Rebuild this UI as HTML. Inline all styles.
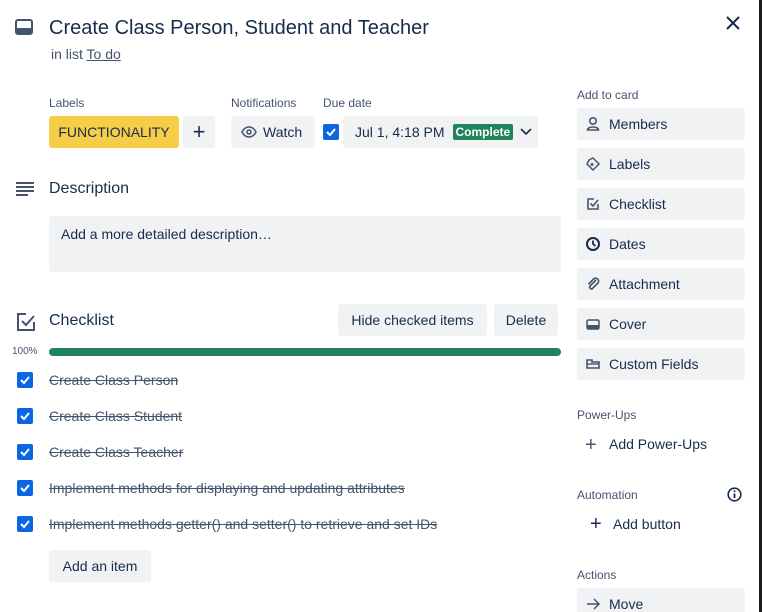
<!DOCTYPE html>
<html><head><style>
*{margin:0;padding:0;box-sizing:border-box}
html{width:762px;height:612px;overflow:hidden;background:#fff}
body{width:762px;height:612px;overflow:hidden;font-family:"Liberation Sans",sans-serif;color:#172b4d;position:relative}
.edge{position:absolute;left:759px;top:0;width:3px;height:612px;background:#1d1d1d}
.card{position:absolute;left:0;top:0;width:759px;height:612px;background:#fff;border-radius:0 10px 0 0;overflow:hidden}
.a{position:absolute;white-space:nowrap}
.btn{position:absolute;background:#f1f2f4;border-radius:3px;font-size:14px;color:#172b4d;display:flex;align-items:center}
.lbl{font-size:12px;color:#44546f}
.cb{position:absolute;left:17px;width:16px;height:16px;background:#0c66e4;border-radius:2px}
.it{position:absolute;left:49px;font-size:14px;color:#44546f;text-decoration:line-through}
.sb{left:577px;width:168px;height:32px;padding-left:32px}
.sb svg{position:absolute;left:8px;top:8px}
</style></head><body>
<div class="edge"></div>
<div class="card">
<svg class="a" style="left:15px;top:19px" width="18" height="16" viewBox="0 0 18 16"><rect x="1" y="1" width="16" height="14" rx="2" fill="none" stroke="#44546f" stroke-width="2"/><rect x="1" y="9" width="16" height="6" fill="#44546f"/></svg>
<div class="a" style="left:49px;top:17px;font-size:20px">Create Class Person, Student and Teacher</div>
<div class="a" style="left:51px;top:46px;font-size:14px;color:#44546f">in list <u>To do</u></div>
<svg class="a" style="left:725px;top:15px" width="16" height="16" viewBox="0 0 16 16"><path d="M2 2L14 14M14 2L2 14" stroke="#172b4d" stroke-width="2"/></svg>

<div class="a lbl" style="left:49px;top:96px">Labels</div>
<div class="a lbl" style="left:231px;top:96px">Notifications</div>
<div class="a lbl" style="left:323px;top:96px">Due date</div>
<div class="btn" style="left:49px;top:116px;width:130px;height:32px;background:#f5cd47;justify-content:center">FUNCTIONALITY</div>
<div class="btn" style="left:183px;top:116px;width:32px;height:32px;justify-content:center;font-size:22px">+</div>
<div class="btn" style="left:231px;top:116px;width:84px;height:32px;padding-left:10px"><svg width="16" height="12" viewBox="0 0 16 12"><path d="M1 6C3 2 6 1 8 1s5 1 7 5c-2 4-5 5-7 5S3 10 1 6z" fill="none" stroke="#44546f" stroke-width="1.5"/><circle cx="8" cy="6" r="2" fill="none" stroke="#44546f" stroke-width="1.5"/></svg><span style="margin-left:6px">Watch</span></div>
<div class="a" style="left:323px;top:124px;width:16px;height:16px;background:#0c66e4;border-radius:2px"><svg width="16" height="16"><path d="M4 8l3 3 5-6" stroke="#fff" stroke-width="2" fill="none"/></svg></div>
<div class="btn" style="left:343px;top:116px;width:195px;height:32px;padding-left:12px">Jul 1, 4:18 PM<span style="margin-left:8px;background:#1f845a;color:#fff;font-size:12px;font-weight:bold;padding:1px 3px;border-radius:2px">Complete</span><svg style="margin-left:7px" width="12" height="8"><path d="M1 1l5 5 5-5" stroke="#172b4d" stroke-width="1.6" fill="none"/></svg></div>

<svg class="a" style="left:16px;top:182px" width="18" height="14"><path d="M0 1h18M0 5h18M0 9h18M0 13h12" stroke="#44546f" stroke-width="2"/></svg>
<div class="a" style="left:49px;top:180px;font-size:16px">Description</div>
<div class="btn" style="left:49px;top:216px;width:512px;height:56px;align-items:flex-start;padding:10px 12px">Add a more detailed description…</div>

<svg class="a" style="left:16px;top:312px" width="20" height="20" viewBox="0 0 20 20"><path d="M10 2H2v16h16v-8" fill="none" stroke="#44546f" stroke-width="2"/><path d="M6 9l4 4 8-9" fill="none" stroke="#44546f" stroke-width="2"/></svg>
<div class="a" style="left:49px;top:312px;font-size:16px">Checklist</div>
<div class="btn" style="left:338px;top:304px;width:149px;height:32px;justify-content:center">Hide checked items</div>
<div class="btn" style="left:494px;top:304px;width:64px;height:32px;justify-content:center">Delete</div>
<div class="a" style="left:12px;top:346px;font-size:10px;color:#44546f">100%</div>
<div class="a" style="left:49px;top:348px;width:512px;height:8px;background:#1f845a;border-radius:4px"></div>

<div class="cb" style="top:372px"><svg width="16" height="16"><path d="M4 8l3 3 5-6" stroke="#fff" stroke-width="2" fill="none"/></svg></div>
<div class="it" style="top:372px">Create Class Person</div>
<div class="cb" style="top:408px"><svg width="16" height="16"><path d="M4 8l3 3 5-6" stroke="#fff" stroke-width="2" fill="none"/></svg></div>
<div class="it" style="top:408px">Create Class Student</div>
<div class="cb" style="top:444px"><svg width="16" height="16"><path d="M4 8l3 3 5-6" stroke="#fff" stroke-width="2" fill="none"/></svg></div>
<div class="it" style="top:444px">Create Class Teacher</div>
<div class="cb" style="top:480px"><svg width="16" height="16"><path d="M4 8l3 3 5-6" stroke="#fff" stroke-width="2" fill="none"/></svg></div>
<div class="it" style="top:480px">Implement methods for displaying and updating attributes</div>
<div class="cb" style="top:516px"><svg width="16" height="16"><path d="M4 8l3 3 5-6" stroke="#fff" stroke-width="2" fill="none"/></svg></div>
<div class="it" style="top:516px">Implement methods getter() and setter() to retrieve and set IDs</div>
<div class="btn" style="left:49px;top:550px;width:102px;height:32px;justify-content:center">Add an item</div>

<div class="a lbl" style="left:577px;top:88px">Add to card</div>
<div class="btn sb" style="top:108px"><svg width="16" height="16"><circle cx="8" cy="5" r="3.2" fill="none" stroke="#44546f" stroke-width="1.6"/><path d="M2.5 14c0-4 11-4 11 0z" fill="none" stroke="#44546f" stroke-width="1.6"/></svg>Members</div>
<div class="btn sb" style="top:148px"><svg width="16" height="16"><path d="M8 2l6 6-6 6-6-6 2-4z" fill="none" stroke="#44546f" stroke-width="1.5"/><circle cx="7" cy="8.5" r="1.5" fill="#44546f"/></svg>Labels</div>
<div class="btn sb" style="top:188px"><svg width="16" height="16"><path d="M9 3H3v10h10V8" fill="none" stroke="#44546f" stroke-width="1.6"/><path d="M5.5 7.5l2.5 2.5 5-6" fill="none" stroke="#44546f" stroke-width="1.6"/></svg>Checklist</div>
<div class="btn sb" style="top:228px"><svg width="16" height="16"><circle cx="8" cy="8" r="6" fill="none" stroke="#172b4d" stroke-width="2"/><path d="M8 4.5V8l2.5 2" fill="none" stroke="#172b4d" stroke-width="1.8"/></svg>Dates</div>
<div class="btn sb" style="top:268px"><svg width="16" height="16"><path d="M11 4L5 10a1.8 1.8 0 0 0 2.5 2.5L13 7a3 3 0 0 0-4.2-4.2L3.5 8.2" fill="none" stroke="#44546f" stroke-width="1.7"/></svg>Attachment</div>
<div class="btn sb" style="top:308px"><svg width="16" height="16"><rect x="2" y="4" width="12" height="9" rx="1.5" fill="none" stroke="#44546f" stroke-width="1.5"/><rect x="2" y="9" width="12" height="4" fill="#44546f"/></svg>Cover</div>
<div class="btn sb" style="top:348px"><svg width="16" height="16"><path d="M2 4h5v2h7v6H2z" fill="none" stroke="#44546f" stroke-width="1.6"/><path d="M2 8h12" stroke="#44546f" stroke-width="1.4"/></svg>Custom Fields</div>

<div class="a lbl" style="left:577px;top:408px">Power-Ups</div>
<div class="a" style="left:585px;top:434px;font-size:20px;color:#44546f;font-weight:300">+</div>
<div class="a" style="left:609px;top:436px;font-size:14px">Add Power-Ups</div>
<div class="a lbl" style="left:577px;top:488px">Automation</div>
<svg class="a" style="left:727px;top:487px" width="15" height="15"><circle cx="7.5" cy="7.5" r="6.3" fill="none" stroke="#172b4d" stroke-width="1.6"/><path d="M7.5 6.5v4.5" stroke="#172b4d" stroke-width="1.8"/><circle cx="7.5" cy="4.3" r="1" fill="#172b4d"/></svg>
<div class="a" style="left:590px;top:513px;font-size:20px">+</div>
<div class="a" style="left:613px;top:516px;font-size:14px">Add button</div>
<div class="a lbl" style="left:577px;top:568px">Actions</div>
<div class="btn sb" style="top:588px;padding-left:32px"><svg width="16" height="16"><path d="M2 8h12M9 3l5 5-5 5" fill="none" stroke="#44546f" stroke-width="1.5"/></svg>Move</div>
</div>
</body></html>
